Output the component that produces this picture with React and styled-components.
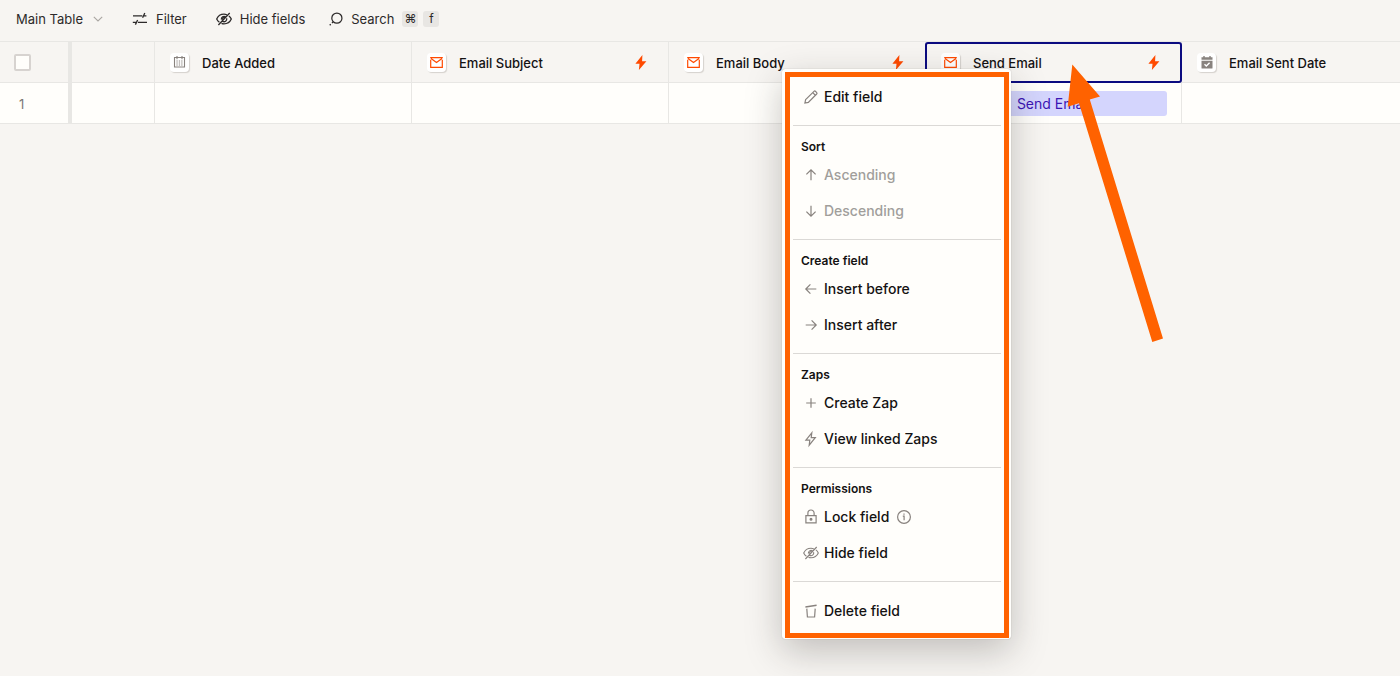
import React from "react";
import styled, { createGlobalStyle, css } from "styled-components";

const color = {
  page: "#f7f5f2",
  cell: "#fffefb",
  line: "#e8e7e4",
  ink: "#141212",
  toolbar: "#2d2a2a",
  icon: "#88827e",
  muted: "#a19e9b",
  orange: "#ff6200",
  zap: "#ff4a00",
  navy: "#0b0b80",
};

const GlobalStyle = createGlobalStyle`
  *, *::before, *::after { box-sizing: border-box; }
  html { background: ${color.page}; }
  body {
    margin: 0;
    background: ${color.page};
    color: ${color.ink};
    font-family: Inter, "Liberation Sans", sans-serif;
    font-size: 14px;
    line-height: 20px;
  }
`;

const Page = styled.main`
  min-height: 100vh;
  overflow: hidden;
`;

const Toolbar = styled.div`
  display: flex;
  align-items: center;
  gap: 29px;
  height: 41px;
  padding: 0 16px 4px;
  font-size: 13px;
`;

const ToolButton = styled.button`
  display: flex;
  align-items: center;
  gap: ${(p) => p.$gap || 8}px;
  padding: 0;
  border: 0;
  background: none;
  color: ${color.toolbar};
  font: inherit;
  white-space: nowrap;
  cursor: pointer;
`;

const ShortcutButton = styled(ToolButton)`
  margin-left: -5px;
`;

const Keys = styled.span`
  display: flex;
  gap: 5px;
`;

const Key = styled.kbd`
  display: grid;
  place-items: center;
  width: 16px;
  height: 16px;
  border-radius: 3px;
  background: #e8e6e3;
  color: ${color.toolbar};
  font: 12px/16px Inter, "DejaVu Sans", sans-serif;
`;

const Grid = styled.div`
  position: relative;
`;

const Table = styled.table`
  width: 100%;
  table-layout: fixed;
  border-collapse: separate;
  border-spacing: 0;
  border-top: 1px solid ${color.line};
`;

const Col = styled.col`
  width: ${(p) => p.$w};
`;

const cellBase = css`
  height: 41px;
  padding: 1px 0 0;
  border-bottom: 1px solid ${color.line};
  border-right: ${(p) => (p.$frozen ? "4px" : "1px")} solid ${color.line};

  &:last-child {
    border-right: 0;
  }
`;

const HeadCell = styled.th`
  ${cellBase}
  position: relative;
  font-size: 13px;
  font-weight: 500;
  text-align: left;
  ${(p) =>
    p.$selected &&
    css`
      &::after {
        content: "";
        position: absolute;
        inset: 0 -1px -1px -1px;
        border: 2px solid ${color.navy};
        border-radius: 3px;
        pointer-events: none;
      }
    `}
`;

const BodyCell = styled.td`
  ${cellBase}
  background: ${color.cell};
`;

const FieldHead = styled.div`
  display: flex;
  align-items: center;
  gap: 13px;
  padding: 0 21px 0 15px;
`;

const FieldName = styled.span`
  flex: 1;
  white-space: nowrap;
`;

const Tile = styled.span`
  display: grid;
  place-items: center;
  width: 19px;
  height: 19px;
  border-radius: 4px;
  background: #fff;
  box-shadow: 1px 1px 1px rgba(60, 50, 40, 0.18);
`;

const CheckSlot = styled.div`
  display: flex;
  padding-left: 14px;
`;

const Checkbox = styled.input`
  appearance: none;
  width: 17px;
  height: 17px;
  margin: 0;
  border: 2px solid #d7d3d0;
  border-radius: 2px;
  background: ${color.cell};
`;

const RowNumber = styled.div`
  padding-left: 19px;
  color: #7c7875;
  font-size: 13px;
`;

const CellButton = styled.button`
  display: block;
  width: calc(100% - 28px);
  height: 25px;
  margin: 0 14px;
  padding: 0;
  border: 0;
  border-radius: 3px;
  background: #d4d5fd;
  color: #3c15b4;
  font: inherit;
  cursor: pointer;
`;

const Menu = styled.div`
  position: absolute;
  top: 28px;
  left: 782px;
  width: 229px;
  padding: 10px 10px 10px 11px;
  border-radius: 3px;
  background: ${color.cell};
  box-shadow: 0 12px 36px rgba(40, 35, 30, 0.26), 0 0 1px rgba(40, 35, 30, 0.4);

  &::after {
    content: "";
    position: absolute;
    inset: 3px 2px 1px 3px;
    border: 5px solid ${color.orange};
    pointer-events: none;
  }
`;

const Section = styled.section`
  padding-bottom: 10px;

  & + & {
    padding-top: 10px;
    border-top: 1px solid #dbd9d6;
  }

  &:last-child {
    padding-top: 11px;
    padding-bottom: 0;
  }
`;

const SectionTitle = styled.h2`
  margin: 0;
  padding: 0 8px;
  font-size: 12px;
  font-weight: 600;
  line-height: 21px;
`;

const Item = styled.button`
  display: flex;
  align-items: center;
  gap: 5px;
  width: 100%;
  height: 36px;
  padding: 0 10px;
  border: 0;
  background: none;
  color: ${color.ink};
  font: inherit;
  font-weight: 500;
  white-space: nowrap;
  cursor: pointer;

  &:disabled {
    color: ${color.muted};
    cursor: default;
  }
`;

const Svg = styled.svg`
  display: block;
  flex: none;
  overflow: visible;
  fill: none;
  stroke: ${(p) => p.$c || color.icon};
  stroke-width: ${(p) => p.$sw ?? 1.2};
`;

const Pointer = styled.svg`
  position: absolute;
  top: 23px;
  left: 1067px;
  fill: ${color.orange};
  pointer-events: none;
`;

const Icon = ({ children, size = 16, ...rest }) => (
  <Svg width={size} height={size} viewBox="0 0 16 16" aria-hidden="true" {...rest}>
    {children}
  </Svg>
);

const Chevron = () => (
  <Svg width="10" height="6" viewBox="0 0 10 6" $c="#aaa6a2" $sw={1.1} aria-hidden="true">
    <path d="M.8.8 5 5 9.2.8" />
  </Svg>
);

const FilterIcon = () => (
  <Icon $c={color.toolbar} $sw={1.3}>
    <path d="M1 4.8h9.3M11.9 4.8H14.4M12.8 2 10.6 6.8M.8 11.4h3.4M5.9 11.4H15M5.6 9 3.4 13.6" />
  </Icon>
);

const HiddenIcon = (props) => (
  <Icon {...props}>
    <path d="M10.9 3.9C10 3.5 9 3.2 8 3.2 4.7 3.2 1.9 5.3.7 8c.6 1.3 1.5 2.4 2.7 3.2M5.5 12.3c.8.3 1.6.5 2.5.5 3.3 0 6.1-2.1 7.3-4.8-.5-1.2-1.4-2.3-2.4-3.1" />
    <path d="M13.7 2 2.4 14M9.6 5.9A2.7 2.7 0 0 0 5.4 8.6M6.6 10.3A2.7 2.7 0 0 0 10.6 7.2" />
    <path d="M7 8.8A1.3 1.3 0 0 1 8.9 7" />
  </Icon>
);

const SearchIcon = () => (
  <Icon size={14} $c={color.toolbar} $sw={1.4}>
    <circle cx="9" cy="7" r="5.8" />
    <path d="m4.8 11.2-1.4 1.4M2 14l-1.2 1.2" />
  </Icon>
);

const MailIcon = () => (
  <Svg width="13" height="11" viewBox="0 0 13 11" $c={color.zap} $sw={1.2} aria-hidden="true">
    <path d="M.7 2.8V10.3H12.3V2.8M.2.7h12.6M1 1.4l5.5 4.2L12 1.4" />
  </Svg>
);

const BoltIcon = () => (
  <Svg width="12" height="15" viewBox="0 0 12 15" $sw={0} aria-hidden="true">
    <path fill={color.zap} d="M7.4 0 .4 8.7h4.1L3.9 15l7.5-8.8H7.1z" />
  </Svg>
);

const CalendarIcon = () => (
  <Svg width="13" height="13" viewBox="0 0 13 13" $sw={1.1} aria-hidden="true">
    <path d="M1.5 1.5h10v9.5h-10zM4 0v3.2M9 0v3.2" />
    <path d="M3.4 5h1.3m1.1 0h1.3m1.1 0h1.3M3.4 7h1.3m1.1 0h1.3m1.1 0h1.3M3.4 9h1.3m1.1 0h1.3m1.1 0h1.3" />
  </Svg>
);

const CalendarCheckIcon = () => (
  <Svg width="12" height="13" viewBox="0 0 12 13" $sw={0} aria-hidden="true">
    <path fill={color.icon} d="M2.3 0h1.4v1.3h4.6V0h1.4v1.3H11.5v2.5H.5V1.3h1.8zM.5 4.7h11V12a.5.5 0 0 1-.5.5H1A.5.5 0 0 1 .5 12z" />
    <path d="m3.5 8.2 1.8 1.8 3.3-3.3" stroke="#fff" strokeWidth="1.4" />
  </Svg>
);

const PencilIcon = () => (
  <Icon>
    <path d="M2.6 10.7 11 2.3a1 1 0 0 1 1.4 0l1.3 1.3a1 1 0 0 1 0 1.4L5.3 13.4l-3.4.7zM10 3.9l2.1 2.1" />
  </Icon>
);
const ArrowIcon = ({ turn }) => (
  <Icon>
    <g transform={`rotate(${turn} 8 8)`}>
      <path d="M8 13.3V3M3.4 7.4 8 2.8l4.6 4.6" />
    </g>
  </Icon>
);
const PlusIcon = () => (
  <Icon>
    <path d="M8 3.2v9.6M3.2 8h9.6" />
  </Icon>
);
const ZapIcon = () => (
  <Icon>
    <path d="M8.8 1.8 2.9 9.2h3.9l-.6 5 6.1-7.5H8.2z" />
  </Icon>
);
const LockIcon = () => (
  <Icon>
    <path d="M2.9 6.6h10.2v7.2H2.9zM4.9 6.6V4.1a3.1 3.1 0 0 1 6.2 0v2.5" />
    <circle cx="8" cy="10.2" r=".9" fill={color.icon} />
  </Icon>
);
const InfoIcon = () => (
  <Icon>
    <circle cx="8" cy="8" r="6.4" />
    <path d="M6.8 7.2H8.1v4M8 4.4v1.3" />
  </Icon>
);
const TrashIcon = () => (
  <Icon>
    <path d="M3.8 5.6 4.4 14h7.2l.6-8.4" />
    <path d="M2.4 3.9 13.6 2.3" strokeWidth="1.5" />
  </Icon>
);

const InfoSlot = styled.span`
  margin-left: 2px;
`;

const fields = [
  { name: "Date Added", icon: <CalendarIcon /> },
  { name: "Email Subject", icon: <MailIcon />, zap: true },
  { name: "Email Body", icon: <MailIcon />, zap: true },
  { name: "Send Email", icon: <MailIcon />, zap: true, selected: true, action: "Send Email" },
  { name: "Email Sent Date", icon: <CalendarCheckIcon /> },
];

const sections = [
  { items: [{ label: "Edit field", icon: <PencilIcon /> }] },
  {
    title: "Sort",
    items: [
      { label: "Ascending", icon: <ArrowIcon turn={0} />, disabled: true },
      { label: "Descending", icon: <ArrowIcon turn={180} />, disabled: true },
    ],
  },
  {
    title: "Create field",
    items: [
      { label: "Insert before", icon: <ArrowIcon turn={-90} /> },
      { label: "Insert after", icon: <ArrowIcon turn={90} /> },
    ],
  },
  {
    title: "Zaps",
    items: [
      { label: "Create Zap", icon: <PlusIcon /> },
      { label: "View linked Zaps", icon: <ZapIcon /> },
    ],
  },
  {
    title: "Permissions",
    items: [
      { label: "Lock field", icon: <LockIcon />, info: true },
      { label: "Hide field", icon: <HiddenIcon $sw={1.1} /> },
    ],
  },
  { items: [{ label: "Delete field", icon: <TrashIcon /> }] },
];

export default function App() {
  return (
    <Page>
      <GlobalStyle />
      <Toolbar>
        <ToolButton type="button" $gap={10}>
          Main Table
          <Chevron />
        </ToolButton>
        <ToolButton type="button">
          <FilterIcon />
          Filter
        </ToolButton>
        <ToolButton type="button">
          <HiddenIcon $c={color.toolbar} $sw={1.3} />
          Hide fields
        </ToolButton>
        <ShortcutButton type="button">
          <SearchIcon />
          Search
          <Keys>
            <Key>⌘</Key>
            <Key>f</Key>
          </Keys>
        </ShortcutButton>
      </Toolbar>

      <Grid>
        <Table>
          <colgroup>
            <Col $w="72px" />
            <Col $w="83px" />
            <Col $w="257px" />
            <Col $w="257px" />
            <Col $w="257px" />
            <Col $w="256px" />
            <Col $w="auto" />
          </colgroup>
          <thead>
            <tr>
              <HeadCell $frozen>
                <CheckSlot>
                  <Checkbox type="checkbox" aria-label="Select all rows" />
                </CheckSlot>
              </HeadCell>
              <HeadCell />
              {fields.map((f) => (
                <HeadCell key={f.name} $selected={f.selected}>
                  <FieldHead>
                    <Tile>{f.icon}</Tile>
                    <FieldName>{f.name}</FieldName>
                    {f.zap && <BoltIcon />}
                  </FieldHead>
                </HeadCell>
              ))}
            </tr>
          </thead>
          <tbody>
            <tr>
              <BodyCell $frozen>
                <RowNumber>1</RowNumber>
              </BodyCell>
              <BodyCell />
              {fields.map((f) => (
                <BodyCell key={f.name}>
                  {f.action && <CellButton type="button">{f.action}</CellButton>}
                </BodyCell>
              ))}
            </tr>
          </tbody>
        </Table>

        <Menu role="menu" aria-label="Field options">
          {sections.map((s, i) => (
            <Section key={i}>
              {s.title && <SectionTitle>{s.title}</SectionTitle>}
              {s.items.map((it) => (
                <Item key={it.label} type="button" role="menuitem" disabled={it.disabled}>
                  {it.icon}
                  {it.label}
                  {it.info && (
                    <InfoSlot>
                      <InfoIcon />
                    </InfoSlot>
                  )}
                </Item>
              ))}
            </Section>
          ))}
        </Menu>

        <Pointer width="97" height="278" viewBox="0 0 97 278" aria-hidden="true">
          <path d="M5.3.5 33 32.4 22.8 35.6 96 274.6 85.3 278 12 39.3.7 42.7z" />
        </Pointer>
      </Grid>
    </Page>
  );
}
